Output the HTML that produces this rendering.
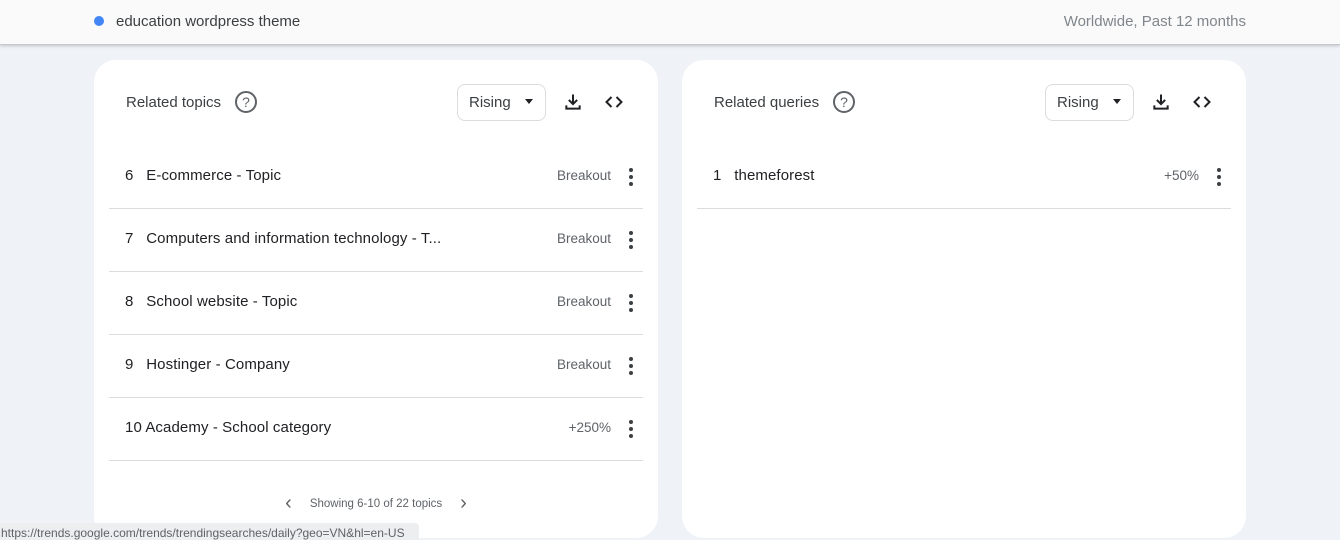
<!DOCTYPE html>
<html><head><style>
*{margin:0;padding:0;box-sizing:border-box}
body{width:1340px;height:540px;background:#eff3f8;font-family:"Liberation Sans",Arial,sans-serif;position:relative;overflow:hidden;color:#202124}
.top{position:absolute;left:0;top:0;width:1340px;height:45px;background:#fafafa;border-bottom:1px solid #c8c8c8;box-shadow:0 1px 3px rgba(0,0,0,.2)}
.top .dot{position:absolute;left:94px;top:16px;width:10px;height:10px;border-radius:50%;background:#4285f4}
.top .t{position:absolute;left:116px;top:13px;font-size:15px;color:#3c4043}
.top .r{position:absolute;right:94px;top:13px;font-size:15px;color:#80868b}
.card{position:absolute;top:60px;width:564px;height:478px;background:#fff;border-radius:22px}
.h{position:absolute;left:32px;top:34px;font-size:15px;color:#3c4043}
.q{position:absolute;top:31px;width:22px;height:22px;border:2px solid #5f6368;border-radius:50%;font-size:14px;color:#5f6368;text-align:center;line-height:18px}
.dd{position:absolute;left:363px;top:24px;width:89px;height:37px;border:1px solid #dadce0;border-radius:8px;font-size:15px;color:#3c4043;padding:9px 0 0 11px}
.dd:after{content:"";position:absolute;right:12px;top:14px;border:4px solid transparent;border-top:5px solid #202124}
.ic{position:absolute;top:32px}
.row{position:absolute;left:15px;width:534px;height:63px;border-bottom:1px solid #dadce0}
.row .n{position:absolute;left:16px;top:21px;font-size:15px;color:#202124;letter-spacing:.1px}
.row .v{position:absolute;right:32px;top:22px;font-size:13.5px;color:#5f6368}
.row .m{position:absolute;right:10px;top:22px;width:4px}
.row .m i{display:block;width:4px;height:4px;background:#3c4043;border-radius:50%;margin-bottom:3px}
.pg{position:absolute;left:0;width:564px;top:434px;text-align:center;font-size:11.5px;color:#5f6368;line-height:18px}
.pg b{font-weight:normal;font-size:20px;color:#5f6368;vertical-align:-2px}
.status{position:absolute;left:0;top:523px;height:17px;width:419px;background:#eceef0;border-top-right-radius:4px;font-size:12px;color:#5f6368;padding:3px 0 0 1px}
</style></head><body>
<div class="top"><div class="dot"></div><div class="t">education wordpress theme</div><div class="r">Worldwide, Past 12 months</div></div>

<div class="card" style="left:94px">
<div class="h">Related topics</div><div class="q" style="left:141px">?</div>
<div class="dd">Rising</div>
<svg class="ic" style="left:469px" width="20" height="20" viewBox="0 0 24 24"><path d="M12 3v11M7 9.5l5 5 5-5M4 16v4h16v-4" fill="none" stroke="#202124" stroke-width="2.4"/></svg>
<svg class="ic" style="left:509px" width="22" height="20" viewBox="0 0 24 24"><path d="M9 6l-6 6 6 6M15 6l6 6-6 6" fill="none" stroke="#202124" stroke-width="2.4"/></svg>
<div class="row" style="top:86px"><span class="n">6&nbsp;&nbsp; E-commerce - Topic</span><span class="v">Breakout</span><span class="m"><i></i><i></i><i></i></span></div>
<div class="row" style="top:149px"><span class="n">7&nbsp;&nbsp; Computers and information technology - T...</span><span class="v">Breakout</span><span class="m"><i></i><i></i><i></i></span></div>
<div class="row" style="top:212px"><span class="n">8&nbsp;&nbsp; School website - Topic</span><span class="v">Breakout</span><span class="m"><i></i><i></i><i></i></span></div>
<div class="row" style="top:275px"><span class="n">9&nbsp;&nbsp; Hostinger - Company</span><span class="v">Breakout</span><span class="m"><i></i><i></i><i></i></span></div>
<div class="row" style="top:338px"><span class="n">10 Academy - School category</span><span class="v">+250%</span><span class="m"><i></i><i></i><i></i></span></div>
<div class="pg"><b style="margin-right:18px">&#8249;</b>Showing 6-10 of 22 topics<b style="margin-left:18px">&#8250;</b></div>
</div>

<div class="card" style="left:682px">
<div class="h">Related queries</div><div class="q" style="left:151px">?</div>
<div class="dd">Rising</div>
<svg class="ic" style="left:469px" width="20" height="20" viewBox="0 0 24 24"><path d="M12 3v11M7 9.5l5 5 5-5M4 16v4h16v-4" fill="none" stroke="#202124" stroke-width="2.4"/></svg>
<svg class="ic" style="left:509px" width="22" height="20" viewBox="0 0 24 24"><path d="M9 6l-6 6 6 6M15 6l6 6-6 6" fill="none" stroke="#202124" stroke-width="2.4"/></svg>
<div class="row" style="top:86px"><span class="n">1&nbsp;&nbsp; themeforest</span><span class="v">+50%</span><span class="m"><i></i><i></i><i></i></span></div>
</div>

<div class="status">https://trends.google.com/trends/trendingsearches/daily?geo=VN&amp;hl=en-US</div>
</body></html>
